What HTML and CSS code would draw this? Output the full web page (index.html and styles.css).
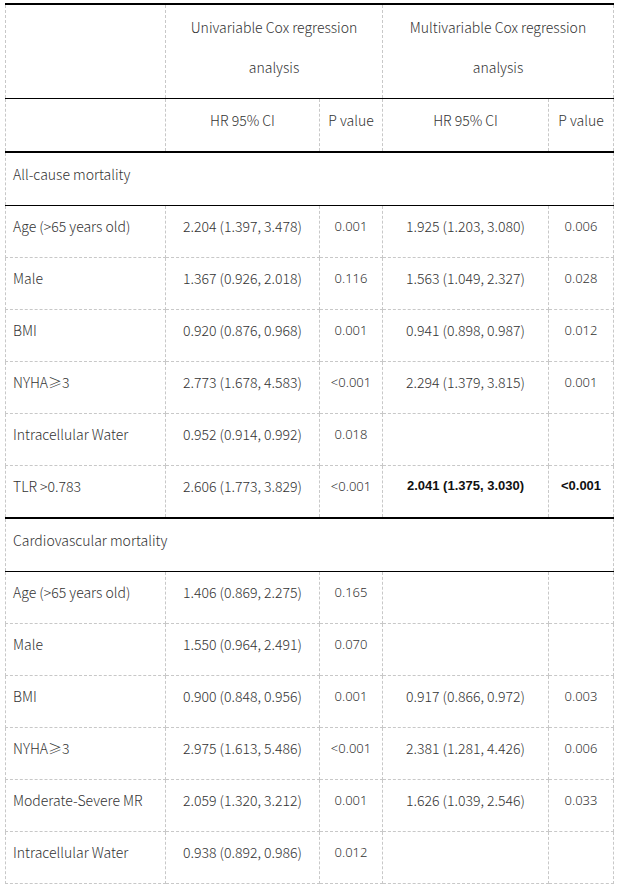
FILE: index.html
```html
<!DOCTYPE html>
<html lang="en">
<head>
<meta charset="utf-8">
<title>Cox regression analysis</title>
<link rel="stylesheet" href="styles.css">
</head>
<body>
<table class="cox">
  <colgroup>
    <col class="c-label">
    <col class="c-hr">
    <col class="c-p">
    <col class="c-hr2">
    <col class="c-p2">
  </colgroup>
  <thead>
    <tr class="head1">
      <th></th>
      <th colspan="2">Univariable Cox regression analysis</th>
      <th colspan="2">Multivariable Cox regression analysis</th>
    </tr>
    <tr class="head2">
      <th></th>
      <th>HR 95% CI</th>
      <th>P value</th>
      <th>HR 95% CI</th>
      <th>P value</th>
    </tr>
  </thead>
  <tbody>
    <tr class="section">
      <td colspan="5">All-cause mortality</td>
    </tr>
    <tr>
      <td class="label">Age (&gt;65 years old)</td>
      <td>2.204 (1.397, 3.478)</td>
      <td class="p">0.001</td>
      <td>1.925 (1.203, 3.080)</td>
      <td class="p">0.006</td>
    </tr>
    <tr>
      <td class="label">Male</td>
      <td>1.367 (0.926, 2.018)</td>
      <td class="p">0.116</td>
      <td>1.563 (1.049, 2.327)</td>
      <td class="p">0.028</td>
    </tr>
    <tr>
      <td class="label">BMI</td>
      <td>0.920 (0.876, 0.968)</td>
      <td class="p">0.001</td>
      <td>0.941 (0.898, 0.987)</td>
      <td class="p">0.012</td>
    </tr>
    <tr>
      <td class="label">NYHA≥3</td>
      <td>2.773 (1.678, 4.583)</td>
      <td class="p">&lt;0.001</td>
      <td>2.294 (1.379, 3.815)</td>
      <td class="p">0.001</td>
    </tr>
    <tr>
      <td class="label">Intracellular Water</td>
      <td>0.952 (0.914, 0.992)</td>
      <td class="p">0.018</td>
      <td></td>
      <td></td>
    </tr>
    <tr class="last">
      <td class="label">TLR &gt;0.783</td>
      <td>2.606 (1.773, 3.829)</td>
      <td class="p">&lt;0.001</td>
      <td class="strong">2.041 (1.375, 3.030)</td>
      <td class="p strong">&lt;0.001</td>
    </tr>
    <tr class="section">
      <td colspan="5">Cardiovascular mortality</td>
    </tr>
    <tr>
      <td class="label">Age (&gt;65 years old)</td>
      <td>1.406 (0.869, 2.275)</td>
      <td class="p">0.165</td>
      <td></td>
      <td></td>
    </tr>
    <tr>
      <td class="label">Male</td>
      <td>1.550 (0.964, 2.491)</td>
      <td class="p">0.070</td>
      <td></td>
      <td></td>
    </tr>
    <tr>
      <td class="label">BMI</td>
      <td>0.900 (0.848, 0.956)</td>
      <td class="p">0.001</td>
      <td>0.917 (0.866, 0.972)</td>
      <td class="p">0.003</td>
    </tr>
    <tr>
      <td class="label">NYHA≥3</td>
      <td>2.975 (1.613, 5.486)</td>
      <td class="p">&lt;0.001</td>
      <td>2.381 (1.281, 4.426)</td>
      <td class="p">0.006</td>
    </tr>
    <tr>
      <td class="label">Moderate-Severe MR</td>
      <td>2.059 (1.320, 3.212)</td>
      <td class="p">0.001</td>
      <td>1.626 (1.039, 2.546)</td>
      <td class="p">0.033</td>
    </tr>
    <tr>
      <td class="label">Intracellular Water</td>
      <td>0.938 (0.892, 0.986)</td>
      <td class="p">0.012</td>
      <td></td>
      <td></td>
    </tr>
  </tbody>
</table>
</body>
</html>
```

FILE: styles.css
```css
html, body {
  margin: 0;
  padding: 0;
  background: #ffffff;
}

body {
  padding: 3px 0 0 5px;
  font-family: "Noto Sans CJK SC", "Noto Sans", sans-serif;
  font-size: 14px;
  color: #333333;
}

.cox {
  border-collapse: collapse;
  table-layout: fixed;
  width: 608px;
}

.c-label { width: 160px; }
.c-hr { width: 154px; }
.c-p { width: 63px; }
.c-hr2 { width: 166px; }
.c-p2 { width: 65px; }

.cox th,
.cox td {
  border: 1px dashed #c8c8c8;
  font-weight: 300;
  text-align: center;
  vertical-align: middle;
  line-height: 40px;
  padding: 0 4px 11px;
  height: 40px;
}

.cox td.label,
.cox .section td {
  text-align: left;
  padding-left: 7px;
}

.cox .p {
  font-family: "Noto Sans", "DejaVu Sans", sans-serif;
  font-size: 13px;
  font-weight: 300;
  color: #333333;
}

.cox .strong {
  font-family: "Liberation Sans", Arial, sans-serif;
  font-size: 13px;
  font-weight: 700;
  color: #111111;
}

.head1 th {
  border-top: 2px solid #000000;
  border-bottom: 1px solid #000000;
  padding-top: 2px;
  padding-bottom: 11px;
}

.head2 th {
  border-bottom: 2px solid #000000;
  padding-top: 1px;
}

.section td {
  border-bottom: 1px solid #000000;
  padding-top: 1px;
}

.last td {
  border-bottom: 2px solid #000000;
}
```
